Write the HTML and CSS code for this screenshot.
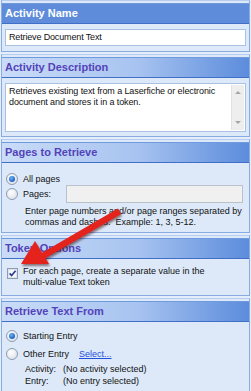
FILE: index.html
```html
<!DOCTYPE html>
<html lang="en">
<head>
  <meta charset="UTF-8">
  <title>Retrieve Document Text</title>
  <link rel="stylesheet" href="styles.css">
</head>
<body>
  <!-- Activity name -->
  <div class="pane">
    <div class="pane-head pane-head-active">Activity Name</div>
    <div class="pane-body">
      <div class="field">Retrieve Document Text</div>
    </div>
  </div>

  <!-- Description -->
  <div class="pane">
    <div class="pane-head">Activity Description</div>
    <div class="pane-body pane-body-memo">
      <div class="memo">
        <div class="memo-text">Retrieves existing text from a Laserfiche or electronic<br>document and stores it in a token.</div>
        <div class="scroll">
          <span class="scroll-up"></span>
          <span class="scroll-down"></span>
        </div>
      </div>
    </div>
  </div>

  <!-- Pages -->
  <div class="pane">
    <div class="pane-head">Pages to Retrieve</div>
    <div class="pane-body pane-body-pages">
      <div class="row">
        <span class="radio radio-on"></span>
        <span>All pages</span>
      </div>
      <div class="row row-pages">
        <span class="radio"></span>
        <span class="pages-label">Pages:</span>
        <span class="field field-off"></span>
      </div>
      <div class="hint">Enter page numbers and/or page ranges separated by<br>commas and dashes.&nbsp; Example: 1, 3, 5-12.</div>
    </div>
  </div>

  <!-- Token options -->
  <div class="pane">
    <div class="pane-head">Token Options</div>
    <div class="pane-body pane-body-token">
      <div class="check-row">
        <svg class="check" width="11" height="11" viewBox="0 0 11 11">
          <rect x="0.5" y="0.5" width="10" height="10" fill="#f4f6fa" stroke="#8e9bb0"/>
          <rect x="1.5" y="1.5" width="8" height="8" fill="none" stroke="#dfe4ec"/>
          <path d="M2.6 5.4 L4.6 7.6 L8.6 2.8" fill="none" stroke="#2b3b8e" stroke-width="1.6"/>
        </svg>
        <span>For each page, create a separate value in the<br>multi-value Text token</span>
      </div>
    </div>
  </div>

  <!-- Retrieve from -->
  <div class="pane pane-last">
    <div class="pane-head">Retrieve Text From</div>
    <div class="pane-body pane-body-from">
      <div class="row">
        <span class="radio radio-on"></span>
        <span>Starting Entry</span>
      </div>
      <div class="row row-other">
        <span class="radio"></span>
        <span class="other-label">Other Entry</span>
        <span class="link">Select...</span>
      </div>
      <div class="detail detail-first">
        <span class="detail-label">Activity:</span>
        <span>(No activity selected)</span>
      </div>
      <div class="detail">
        <span class="detail-label">Entry:</span>
        <span>(No entry selected)</span>
      </div>
    </div>
  </div>

  <!-- Red callout arrow -->
  <svg class="callout" width="251" height="391" viewBox="0 0 251 391">
    <g fill="#e5231d">
      <path d="M118 208.5 L121.2 214 L44 259 L40.8 253.5 Z"/>
      <path d="M21 264 L35 241 L49 264 Z"/>
    </g>
  </svg>
</body>
</html>
```

FILE: styles.css
```css
/* Base */
body {
  margin: 0;
  width: 251px;
  height: 391px;
  overflow: hidden;
  position: relative;
  background: #e4eefa;
  font-family: "Liberation Sans", Arial, sans-serif;
  font-size: 9px;
  color: #111;
}

/* Panels */
.pane {
  margin: 0 1px 2px;
  border: 1px solid #88abe2;
  border-top-color: #b6cdf1;
  padding-top: 2px;
  background: #dde9f9;
}

.pane-last {
  height: 90px;
  margin-bottom: 0;
  border-bottom: none;
}

.pane-head {
  height: 19px;
  line-height: 19px;
  padding-left: 3px;
  border-top: 1px solid #6f9bde;
  border-bottom: 1px solid #3f6fc7;
  background: linear-gradient(90deg, #cadcf7, #a7c3f0 55%, #5c8cdc);
  color: #5343ba;
  font-size: 11px;
  font-weight: bold;
}

.pane-head-active {
  background: #5e8cda;
  color: #ffffff;
}

.pane-body {
  padding: 5px 3px;
}

.pane-body-memo {
  padding-bottom: 4px;
}

.pane-body-pages {
  padding: 9px 3px 4px;
}

.pane-body-token {
  padding: 7px 3px;
}

.pane-body-from {
  padding: 7px 3px 0;
}

/* Inputs */
.field {
  height: 15px;
  line-height: 15px;
  padding-left: 3px;
  border: 1px solid #a9c1e4;
  background: #ffffff;
  letter-spacing: -0.15px;
}

.field-off {
  flex: 1;
  height: 16px;
  margin-right: 3px;
  padding: 0;
  border-color: #b9c2cc;
  background: #f0f0f0;
}

.memo {
  height: 47px;
  display: flex;
  border: 1px solid #a9c1e4;
  background: #ffffff;
}

.memo-text {
  flex: 1;
  padding: 2px 3px;
  line-height: 11px;
  letter-spacing: -0.1px;
}

.scroll {
  width: 12px;
  margin: 1px 1px 1px 0;
  background: #eeeeee;
  border-left: 1px solid #e2e2e2;
  display: flex;
  flex-direction: column;
  justify-content: space-between;
  align-items: center;
  padding: 6px 0;
}

.scroll-up,
.scroll-down {
  width: 0;
  height: 0;
  border-left: 3px solid transparent;
  border-right: 3px solid transparent;
}

.scroll-up {
  border-bottom: 3px solid #a5a5a5;
}

.scroll-down {
  border-top: 3px solid #a5a5a5;
}

/* Radios and rows */
.row {
  display: flex;
  align-items: center;
  gap: 5px;
  height: 13px;
}

.row-pages {
  height: 18px;
}

.row-other {
  margin-top: 5px;
}

.radio {
  width: 10px;
  height: 10px;
  margin-left: 1px;
  border: 1px solid #8d9cb2;
  border-radius: 50%;
  background: radial-gradient(circle at 40% 35%, #ffffff, #d3dae4);
  position: relative;
}

.radio-on::after {
  content: "";
  position: absolute;
  left: 2px;
  top: 2px;
  width: 6px;
  height: 6px;
  border-radius: 50%;
  background: radial-gradient(circle at 40% 35%, #6fb3f4, #1a5fc4 70%, #164f9c);
}

.pages-label {
  width: 38px;
}

.other-label {
  width: 51px;
}

.link {
  color: #1f4fe0;
  text-decoration: underline;
}

.hint {
  margin-top: 3px;
  padding-left: 20px;
  line-height: 11px;
}

/* Checkbox */
.check-row {
  display: flex;
  align-items: flex-start;
  gap: 5px;
  line-height: 11px;
  padding-left: 2px;
}

.check {
  margin-top: 2px;
  flex: none;
}

/* Entry detail */
.detail {
  display: flex;
  padding-left: 20px;
  height: 12px;
  line-height: 12px;
}

.detail-first {
  margin-top: 3px;
}

.detail-label {
  width: 38px;
}

/* Callout arrow over the panels */
.callout {
  position: absolute;
  left: 0;
  top: 0;
  pointer-events: none;
  filter: drop-shadow(1px 2px 1px rgba(60, 20, 20, 0.55));
}
```
